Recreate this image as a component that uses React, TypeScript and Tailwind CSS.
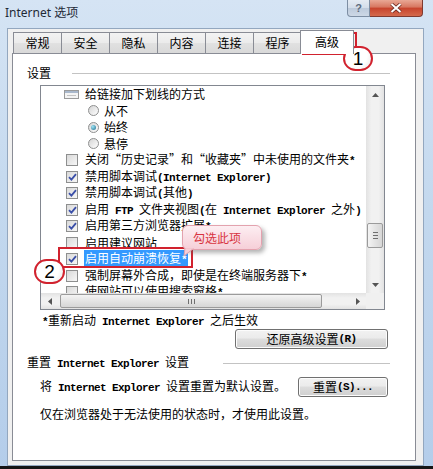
import React from 'react';

type Item = { kind: 'group' | 'radio' | 'check'; label: string; on?: boolean; sel?: boolean };

const ITEMS: Item[] = [
  { kind: 'group', label: '给链接加下划线的方式' },
  { kind: 'radio', label: '从不' },
  { kind: 'radio', label: '始终', on: true },
  { kind: 'radio', label: '悬停' },
  { kind: 'check', label: '关闭“历史记录”和“收藏夹”中未使用的文件夹*' },
  { kind: 'check', label: '禁用脚本调试(Internet Explorer)', on: true },
  { kind: 'check', label: '禁用脚本调试(其他)', on: true },
  { kind: 'check', label: '启用 FTP 文件夹视图(在 Internet Explorer 之外)', on: true },
  { kind: 'check', label: '启用第三方浏览器扩展*', on: true },
  { kind: 'check', label: '启用建议网站' },
  { kind: 'check', label: '启用自动崩溃恢复*', on: true, sel: true },
  { kind: 'check', label: '强制屏幕外合成，即使是在终端服务器下*' },
  { kind: 'check', label: '使网站可以使用搜索窗格*' },
];

const TABS = ['常规', '安全', '隐私', '内容', '连接', '程序'];

// half-width latin runs, like SimSun
const T = ({ s }: { s: string }) => (
  <>
    {s.split(/([\x20-\x7e]+)/).map((p, i) =>
      p === '' ? null : /^[\x20-\x7e]+$/.test(p) ? (
        <span key={i} className="whitespace-pre font-['Liberation_Mono',monospace] text-[11px] font-bold tracking-[-0.6px]">
          {p}
        </span>
      ) : (
        <span key={i}>{p}</span>
      )
    )}
  </>
);

const Check = ({ on }: { on?: boolean }) => (
  <span className="w-[12px] h-[12px] shrink-0 border border-[#8e8f8f] bg-[linear-gradient(135deg,#d9d9d9,#f7f7f7)] flex items-center justify-center">
    {on && (
      <svg width="9" height="8" viewBox="0 0 9 8">
        <path d="M1 4.2 L3.4 6.6 L8 1.2" stroke="#3a4fa8" strokeWidth="1.8" fill="none" />
      </svg>
    )}
  </span>
);

const Radio = ({ on }: { on?: boolean }) => (
  <span className="w-[11px] h-[11px] shrink-0 rounded-full border border-[#8e8f8f] bg-[linear-gradient(135deg,#d4d4d4,#ffffff)] flex items-center justify-center">
    {on && <span className="w-[5px] h-[5px] rounded-full bg-[radial-gradient(circle_at_35%_35%,#9fe6f7,#1d6a8a)]" />}
  </span>
);

const GroupIcon = () => (
  <svg width="15" height="9" viewBox="0 0 15 9" className="shrink-0">
    <rect x="0.5" y="0.5" width="14" height="8" fill="#f4f4f4" stroke="#9a9a9a" />
    <rect x="1" y="1" width="13" height="2" fill="#a9b8cc" />
    <line x1="3" y1="5.5" x2="12" y2="5.5" stroke="#c4c4c4" />
  </svg>
);

const Arrow = ({ dir }: { dir: 'up' | 'down' | 'left' | 'right' }) => {
  const d = {
    up: 'M0 4 L3.5 0 L7 4 Z',
    down: 'M0 0 L7 0 L3.5 4 Z',
    left: 'M4 0 L4 7 L0 3.5 Z',
    right: 'M0 0 L4 3.5 L0 7 Z',
  }[dir];
  const vert = dir === 'up' || dir === 'down';
  return (
    <svg width={vert ? 7 : 4} height={vert ? 4 : 7} viewBox={vert ? '0 0 7 4' : '0 0 4 7'}>
      <path d={d} fill="#555" />
    </svg>
  );
};

const Btn = ({ label, w }: { label: string; w: string }) => (
  <div
    className={`${w} h-[20px] rounded-[3px] border border-[#707070] bg-[linear-gradient(180deg,#f2f2f2_0%,#ebebeb_45%,#dddddd_50%,#cfcfcf_100%)] shadow-[inset_0_0_0_1px_#fcfcfc] flex items-center justify-center leading-[16px]`}
  >
    <T s={label} />
  </div>
);

const Row = ({ it }: { it: Item }) => {
  const pad = it.kind === 'radio' ? 'pl-[47px] gap-[5px]' : it.kind === 'group' ? 'pl-[23px] gap-[6px]' : 'pl-[25px] gap-[7px]';
  return (
    <div className={`h-[16.5px] shrink-0 flex items-center whitespace-nowrap ${pad}`}>
      {it.kind === 'check' && <Check on={it.on} />}
      {it.kind === 'radio' && <Radio on={it.on} />}
      {it.kind === 'group' && <GroupIcon />}
      <span className={it.sel ? 'bg-[#3399ff] text-white px-[1px] -ml-[1px]' : ''}>
        <T s={it.label} />
      </span>
    </div>
  );
};

export default function App() {
  return (
    <div className="relative w-[433px] h-[469px] overflow-hidden flex flex-col bg-[linear-gradient(180deg,#d5e4f4_0%,#c3d8ee_45%,#b4cdea_100%)] font-['Noto_Sans_CJK_SC',sans-serif] text-[12px] leading-[16px] text-black">
      {/* title bar */}
      <div className="h-[28px] shrink-0 flex items-start justify-between pl-[5px] pr-[10px]">
        <span className="mt-[5px] font-['Noto_Sans','Noto_Sans_CJK_SC',sans-serif] text-[12px] text-[#1e2a36]">Internet 选项</span>
        <div className="flex">
          <div className="w-[23px] h-[17px] rounded-bl-[4px] border border-[#7d8ea3] border-t-0 bg-[linear-gradient(180deg,#e4ebf3_0%,#d3dde9_50%,#bccadb_51%,#cdd8e6_100%)] flex items-center justify-center font-['Liberation_Sans',sans-serif] text-[11px] font-bold text-[#5d6b7d]">
            ?
          </div>
          <div className="w-[53px] h-[17px] rounded-br-[4px] border border-[#7f3a30] border-t-0 border-l-0 bg-[linear-gradient(180deg,#e9a895_0%,#d7765f_45%,#c7432c_50%,#d46a4d_100%)] flex items-center justify-center">
            <svg width="12" height="10" viewBox="0 0 12 10">
              <path d="M1.5 1 L10.5 9 M10.5 1 L1.5 9" stroke="#6b2a22" strokeWidth="3.6" />
              <path d="M1.5 1 L10.5 9 M10.5 1 L1.5 9" stroke="#ffffff" strokeWidth="2" />
            </svg>
          </div>
        </div>
      </div>

      {/* client area */}
      <div className="flex-1 pl-[7px] pr-[9px]">
        <div className="h-[438px] bg-[#f0f0f0] border border-[#93a7bf] pl-[4px] pt-[1px] flex flex-col">
          {/* tabs */}
          <div className="h-[23px] flex items-end pl-[1px]">
            {TABS.map((t, i) => (
              <div
                key={t}
                className={`w-[49px] h-[21px] border border-b-0 border-[#898c95] bg-[linear-gradient(180deg,#f3f3f3_0%,#ebebeb_50%,#e1e1e1_51%,#d9d9d9_100%)] flex items-center justify-center ${i > 0 ? '-ml-px' : ''}`}
              >
                {t}
              </div>
            ))}
            <div className="relative z-10 -ml-[2px] -mb-px w-[54px] h-[24px] border border-b-0 border-[#898c95] bg-white flex items-center justify-center pb-[2px]">
              高级
            </div>
          </div>

          {/* panel */}
          <div className="w-[404px] h-[408px] border border-[#898c95] bg-white flex flex-col">
            <div className="flex items-center pt-[11px] pl-[14px] pr-[25px]">
              <span>设置</span>
              <div className="flex-1 ml-[21px] border-t border-[#c3c3c3]" />
            </div>

            {/* listbox */}
            <div className="ml-[27px] mt-[4px] w-[345px] h-[225px] border border-[#828790] grid grid-cols-[325px_18px] grid-rows-[207px_16px]">
              <div className="overflow-hidden flex flex-col">
                {ITEMS.map((it) => (
                  <Row key={it.label} it={it} />
                ))}
              </div>
              <div className="flex flex-col bg-[linear-gradient(90deg,#e2e2e2,#f1f1f1_30%,#f1f1f1_70%,#e2e2e2)]">
                <div className="h-[17px] flex items-center justify-center">
                  <Arrow dir="up" />
                </div>
                <div className="h-[120px]" />
                <div className="h-[25px] mx-[1px] rounded-[2px] border border-[#9b9b9b] bg-[linear-gradient(90deg,#f4f4f4,#e4e4e4_50%,#d6d6d6)] flex flex-col items-center justify-center gap-[2px]">
                  <span className="w-[5px] h-px bg-[#6f6f6f]" />
                  <span className="w-[5px] h-px bg-[#6f6f6f]" />
                  <span className="w-[5px] h-px bg-[#6f6f6f]" />
                </div>
                <div className="flex-1" />
                <div className="h-[17px] flex items-center justify-center">
                  <Arrow dir="down" />
                </div>
              </div>
              <div className="flex bg-[linear-gradient(180deg,#e2e2e2,#f1f1f1_30%,#f1f1f1_70%,#e2e2e2)]">
                <div className="w-[17px] flex items-center justify-center">
                  <Arrow dir="left" />
                </div>
                <div className="w-[2px]" />
                <div className="w-[262px] my-[1px] rounded-[2px] border border-[#9b9b9b] bg-[linear-gradient(180deg,#f4f4f4,#e4e4e4_50%,#d6d6d6)] flex items-center justify-center gap-[2px]">
                  <span className="w-px h-[5px] bg-[#6f6f6f]" />
                  <span className="w-px h-[5px] bg-[#6f6f6f]" />
                  <span className="w-px h-[5px] bg-[#6f6f6f]" />
                </div>
                <div className="flex-1" />
                <div className="w-[17px] flex items-center justify-center">
                  <Arrow dir="right" />
                </div>
              </div>
              <div className="bg-[#f0f0f0]" />
            </div>

            <div className="ml-[29px] mt-[2px] h-[16px]">
              <T s="*重新启动 Internet Explorer 之后生效" />
            </div>
            <div className="mt-[1px] pr-[27px] flex justify-end">
              <Btn label="还原高级设置(R)" w="w-[153px]" />
            </div>

            <div className="mt-[5px] flex items-center pl-[14px] pr-[25px]">
              <span className="whitespace-nowrap">
                <T s="重置 Internet Explorer 设置" />
              </span>
              <div className="flex-1 ml-[34px] border-t border-[#c3c3c3]" />
            </div>
            <div className="mt-[5px] pl-[27px] pr-[27px] flex items-start justify-between">
              <span className="whitespace-nowrap pt-px">
                <T s="将 Internet Explorer 设置重置为默认设置。" />
              </span>
              <Btn label="重置(S)..." w="w-[90px]" />
            </div>
            <div className="mt-[9px] pl-[27px]">仅在浏览器处于无法使用的状态时，才使用此设置。</div>
          </div>
        </div>
      </div>
      <div className="h-[3px] shrink-0 bg-[#151515]" />

      {/* annotations */}
      <div className="absolute left-[302px] top-[32px] w-[55px] h-[23px] border-2 border-[#d1222e]" />
      <div className="absolute left-[343px] top-[46px] w-[30px] h-[25px] rounded-full border-2 border-[#d1222e] bg-[radial-gradient(circle_at_40%_35%,#ffffff_55%,#e6e6e6)] flex items-center justify-center font-['Liberation_Sans',sans-serif] text-[19px] leading-none text-black">
        1
      </div>
      <div className="absolute left-[58px] top-[247px] w-[135px] h-[21px] border-2 border-[#d1222e]" />
      <div className="absolute left-[34px] top-[259px] w-[31px] h-[25px] rounded-full border-2 border-[#d1222e] bg-[radial-gradient(circle_at_40%_35%,#ffffff_55%,#e6e6e6)] flex items-center justify-center font-['Liberation_Sans',sans-serif] text-[19px] leading-none text-black">
        2
      </div>
      <div className="absolute left-[182px] top-[225px] w-[80px] h-[25px] rounded-[6px] border border-[#e3a2ae] bg-[linear-gradient(180deg,#fdeef2,#f6cfd8)] shadow-[3px_3px_4px_rgba(90,90,90,0.45)] pl-[10px] flex items-center text-[#d8343f]">
        勾选此项
      </div>
      <svg className="absolute left-[182px] top-[248px]" width="14" height="9" viewBox="0 0 14 9">
        <path d="M3 0 L2 8 L12 0 Z" fill="#f6cfd8" stroke="#e3a2ae" strokeWidth="1" />
        <path d="M3.5 -1 L12 -1 L12 0.6 L3.5 0.6 Z" fill="#f6cfd8" />
      </svg>
    </div>
  );
}
